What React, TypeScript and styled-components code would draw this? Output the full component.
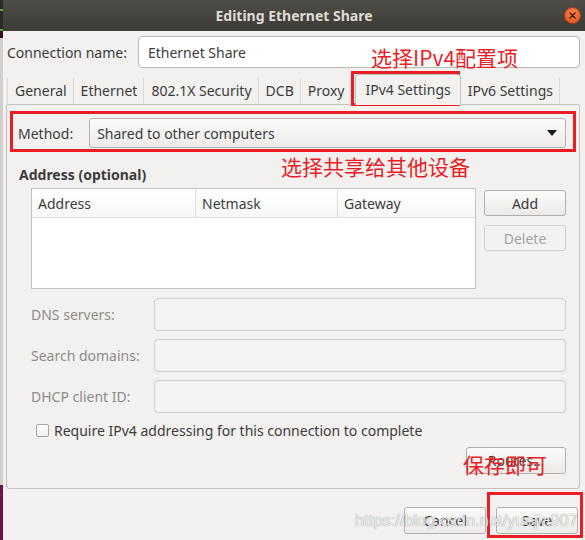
import styled, {createGlobalStyle} from "styled-components";

const RED = "#ea1d25";

const GlobalStyle = createGlobalStyle`
  html, body {
    margin: 0;
    padding: 0;
  }

  body {
    width: 585px;
    height: 540px;
    overflow: hidden;
    background: #f2f1f0;
    font-family: "Noto Sans", "DejaVu Sans", sans-serif;
    font-size: 14px;
    color: #3c3c3c;
  }
`

const Desktop = styled.div`
  position: relative;
  display: flex;
  width: 585px;
  height: 540px;
  overflow: hidden;
`

const DesktopEdge = styled.div`
  flex: none;
  width: 3px;
  background: linear-gradient(to bottom,
  #2b2a27 0, #2b2a27 9px, #59a83a 9px, #59a83a 11px, #2b2a27 11px, #2b2a27 29px,
  #59a83a 29px, #59a83a 31px, #33101f 31px, #33101f 38px, #d2d0cc 38px, #d2d0cc 485px,
  #6e1348 485px);
`

const Window = styled.div`
  flex: 1;
  display: flex;
  flex-direction: column;
  background: #f2f1f0;
`

const TitleBar = styled.header`
  flex: none;
  height: 31px;
  display: grid;
  grid-template-columns: 1fr auto 1fr;
  align-items: center;
  background: linear-gradient(to bottom, #4d4c47, #3c3b37);
  color: #dfdbd2;
  font-weight: bold;
  font-size: 14px;
`

const Title = styled.h1`
  grid-column: 2;
  margin: 0 0 1px;
  font-size: inherit;
`

const CloseButton = styled.button`
  justify-self: end;
  margin-right: 4px;
  width: 17px;
  height: 17px;
  padding: 0;
  border: 1px solid #b23d12;
  border-radius: 50%;
  background: radial-gradient(circle at 50% 35%, #f6854f, #df4d1a);
  display: flex;
  align-items: center;
  justify-content: center;
`

const Body = styled.div`
  flex: 1;
  display: flex;
  flex-direction: column;
  padding: 5px 5px 0 3px;
`

const ConnectionRow = styled.div`
  display: flex;
  align-items: center;
  gap: 11px;
  padding-left: 1px;
`

const Label = styled.span<{ $disabled?: boolean }>`
  color: ${props => props.$disabled ? "#8d8c89" : "#3c3c3c"};
  white-space: nowrap;
`

const Entry = styled.div<{ $disabled?: boolean; $height?: number }>`
  flex: 1;
  box-sizing: border-box;
  height: ${props => props.$height ?? 32}px;
  display: flex;
  align-items: center;
  padding: 0 9px;
  border: 1px solid ${props => props.$disabled ? "#cfccc8" : "#bcb8b3"};
  border-radius: 4px;
  background: ${props => props.$disabled ? "#f4f3f2" : "#ffffff"};
`

const TabStrip = styled.div`
  display: flex;
  align-items: flex-end;
  height: 31px;
  margin-top: 5px;
  padding-left: 1px;
  position: relative;
  z-index: 1;
`

const Tab = styled.div<{ $active?: boolean; $first?: boolean }>`
  box-sizing: border-box;
  display: flex;
  align-items: center;
  white-space: nowrap;
  color: #3c3c3c;
  height: ${props => props.$active ? "31px" : "26px"};
  padding: ${props => props.$active ? "0 9px 1px" : "0 7px 2px"};
  margin: ${props => props.$active ? "0 0 -1px 4px" : "0"};
  background: #f2f1f0;
  border: ${props => props.$active ? "1px solid #c3bfba" : "none"};
  border-bottom: none;
  border-radius: ${props => props.$active ? "4px 4px 0 0" : "0"};
  border-left: ${props => props.$first ? "1px solid #dcd8d4" : undefined};
  box-shadow: ${props => props.$active ? "none" : "inset -1px 0 #dcd8d4"};
`

const Panel = styled.section`
  display: flex;
  flex-direction: column;
  border: 1px solid #c6c2bd;
  border-radius: 2px 2px 3px 3px;
  padding: 13px 13px 14px 11px;
`

const MethodRow = styled.div`
  display: flex;
  align-items: center;
  gap: 16px;
`

const Combo = styled.div`
  flex: 1;
  box-sizing: border-box;
  height: 30px;
  display: flex;
  align-items: center;
  justify-content: space-between;
  padding: 0 8px 0 7px;
  border: 1px solid #b6b2ad;
  border-radius: 3px;
  background: linear-gradient(to bottom, #fbfbfa, #ecebe9);
`

const ComboArrow = styled.span`
  width: 0;
  height: 0;
  border-left: 5px solid transparent;
  border-right: 5px solid transparent;
  border-top: 6px solid #1c1c1c;
`

const Heading = styled.h2`
  margin: 17px 0 0 1px;
  font-size: 14px;
  line-height: 20px;
  font-weight: bold;
  color: #3c3c3c;
`

const AddressArea = styled.div`
  display: grid;
  grid-template-columns: 1fr 82px;
  gap: 8px;
  margin-top: 3px;
  padding-left: 13px;
`

const Table = styled.div`
  box-sizing: border-box;
  height: 101px;
  border: 1px solid #c5c1bc;
  background: #ffffff;
`

const TableHead = styled.div`
  display: grid;
  grid-template-columns: 164px 142px 1fr;
  height: 28px;
  border-bottom: 1px solid #e0ddda;
  background: linear-gradient(to bottom, #ffffff, #f7f7f7);
`

const HeadCell = styled.div<{ $last?: boolean }>`
  display: flex;
  align-items: center;
  padding-left: 6px;
  border-right: ${props => props.$last ? "none" : "1px solid #e2dfdc"};
`

const ButtonColumn = styled.div`
  display: flex;
  flex-direction: column;
  gap: 9px;
  padding-top: 2px;
`

const Button = styled.button<{ $width?: number; $height?: number }>`
  box-sizing: border-box;
  height: ${props => props.$height ?? 26}px;
  width: ${props => props.$width ? `${props.$width}px` : "auto"};
  padding: 0 10px;
  font-family: inherit;
  font-size: 14px;
  color: #3c3c3c;
  border: 1px solid #b3afaa;
  border-radius: 3px;
  background: linear-gradient(to bottom, #fbfbfa, #ebeae8);

  &:disabled {
    color: #a6a4a1;
    border-color: #d3d0cc;
    background: #f3f2f1;
  }
`

const FormGrid = styled.div`
  display: grid;
  grid-template-columns: 123px 1fr;
  row-gap: 8px;
  align-items: center;
  margin-top: 9px;
  padding-left: 13px;
`

const CheckRow = styled.label`
  display: flex;
  align-items: center;
  gap: 5px;
  height: 20px;
  margin-top: 7px;
  padding-left: 18px;
`

const CheckBox = styled.span`
  box-sizing: border-box;
  width: 13px;
  height: 13px;
  border: 1px solid #a9a5a0;
  border-radius: 2px;
  background: linear-gradient(to bottom, #ffffff, #f0efee);
`

const RoutesRow = styled.div`
  display: flex;
  justify-content: flex-end;
  margin-top: 7px;
`

const Actions = styled.footer`
  display: flex;
  justify-content: flex-end;
  gap: 10px;
  padding: 18px 2px 0 0;
`

const Marker = styled.div<{ $x: number; $y: number; $w: number; $h: number }>`
  position: absolute;
  left: ${props => props.$x}px;
  top: ${props => props.$y}px;
  width: ${props => props.$w}px;
  height: ${props => props.$h}px;
  box-sizing: border-box;
  border: 3px solid ${RED};
  pointer-events: none;
`

const Note = styled.div<{ $x: number; $y: number; $size: number }>`
  position: absolute;
  left: ${props => props.$x}px;
  top: ${props => props.$y}px;
  font-family: "Noto Sans CJK SC", "Noto Sans", sans-serif;
  font-size: ${props => props.$size}px;
  line-height: 1;
  color: ${RED};
  white-space: nowrap;
  pointer-events: none;
`

const Watermark = styled.div`
  position: absolute;
  left: 355px;
  top: 512px;
  font-family: "Liberation Sans", Arial, sans-serif;
  font-size: 16.5px;
  line-height: 1;
  color: rgba(255, 255, 255, 0.85);
  text-shadow: 0 0 1px rgba(0, 0, 0, 0.5);
  pointer-events: none;
`

const tabs = ["General", "Ethernet", "802.1X Security", "DCB", "Proxy", "IPv4 Settings", "IPv6 Settings"];

const fields = ["DNS servers:", "Search domains:", "DHCP client ID:"];

export default function App() {
    return <Desktop>
        <GlobalStyle/>
        <DesktopEdge/>
        <Window>
            <TitleBar>
                <Title>Editing Ethernet Share</Title>
                <CloseButton aria-label="close">
                    <svg width="7" height="7" viewBox="0 0 7 7">
                        <path d="M1 1L6 6M6 1L1 6" stroke="#3b1a0e" strokeWidth="1.4" strokeLinecap="round"/>
                    </svg>
                </CloseButton>
            </TitleBar>
            <Body>
                <ConnectionRow>
                    <Label>Connection name:</Label>
                    <Entry>Ethernet Share</Entry>
                </ConnectionRow>
                <TabStrip>
                    {tabs.map((tab, i) => <Tab key={tab} $first={i === 0} $active={tab === "IPv4 Settings"}>{tab}</Tab>)}
                </TabStrip>
                <Panel>
                    <MethodRow>
                        <Label>Method:</Label>
                        <Combo>
                            <span>Shared to other computers</span>
                            <ComboArrow/>
                        </Combo>
                    </MethodRow>
                    <Heading>Address (optional)</Heading>
                    <AddressArea>
                        <Table>
                            <TableHead>
                                <HeadCell>Address</HeadCell>
                                <HeadCell>Netmask</HeadCell>
                                <HeadCell $last>Gateway</HeadCell>
                            </TableHead>
                        </Table>
                        <ButtonColumn>
                            <Button>Add</Button>
                            <Button disabled>Delete</Button>
                        </ButtonColumn>
                    </AddressArea>
                    <FormGrid>
                        {fields.map(field => [
                            <Label key={field} $disabled>{field}</Label>,
                            <Entry key={field + "-entry"} $disabled $height={33}/>
                        ])}
                    </FormGrid>
                    <CheckRow>
                        <CheckBox/>
                        <span>Require IPv4 addressing for this connection to complete</span>
                    </CheckRow>
                    <RoutesRow>
                        <Button $width={100} $height={27}>Routes…</Button>
                    </RoutesRow>
                </Panel>
                <Actions>
                    <Button $width={82} $height={27}>Cancel</Button>
                    <Button $width={82} $height={27}>Save</Button>
                </Actions>
            </Body>
        </Window>

        <Marker $x={351} $y={71} $w={109} $h={35}/>
        <Marker $x={10} $y={111} $w={566} $h={41}/>
        <Marker $x={487} $y={492} $w={96} $h={46}/>
        <Note $x={371} $y={47} $size={21}>选择IPv4配置项</Note>
        <Note $x={281} $y={156} $size={21}>选择共享给其他设备</Note>
        <Note $x={463} $y={454} $size={21}>保存即可</Note>
        <Watermark>https://blog.csdn.net/yuejia907</Watermark>
    </Desktop>
}
